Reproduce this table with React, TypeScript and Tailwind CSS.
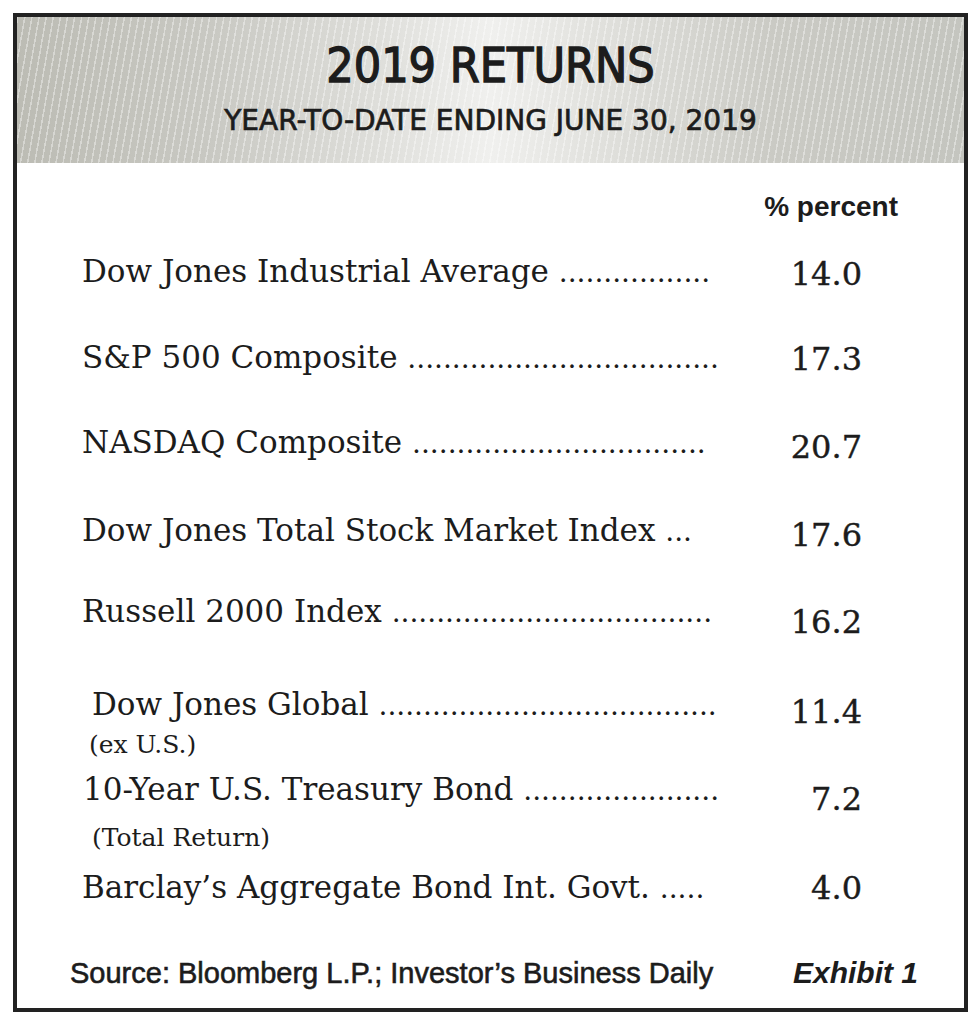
import React from "react";

type Row = {
  label: string;
  dots: string;
  value: string;
  sub?: string;
  h: string;
  indent: string;
  subIndent?: string;
  subMt?: string;
  numMt: string;
};

const rows: Row[] = [
  { label: "Dow Jones Industrial Average", dots: ".................", value: "14.0", h: "h-[86px]", indent: "pl-[65px]", numMt: "mt-[2px]" },
  { label: "S&P 500 Composite", dots: "...................................", value: "17.3", h: "h-[85px]", indent: "pl-[65px]", numMt: "mt-[1px]" },
  { label: "NASDAQ Composite", dots: ".................................", value: "20.7", h: "h-[88px]", indent: "pl-[65px]", numMt: "mt-[4px]" },
  { label: "Dow Jones Total Stock Market Index", dots: "...", value: "17.6", h: "h-[81px]", indent: "pl-[65px]", numMt: "mt-[4px]" },
  { label: "Russell 2000 Index", dots: "....................................", value: "16.2", h: "h-[93px]", indent: "pl-[65px]", numMt: "mt-[10px]" },
  { label: "Dow Jones Global", dots: "......................................", value: "11.4", sub: "(ex U.S.)", h: "h-[85px]", indent: "pl-[75px]", subIndent: "pl-[72px]", subMt: "mt-[11px]", numMt: "mt-[7px]" },
  { label: "10-Year U.S. Treasury Bond", dots: "......................", value: "7.2", sub: "(Total Return)", h: "h-[98px]", indent: "pl-[66px]", subIndent: "pl-[75px]", subMt: "mt-[19px]", numMt: "mt-[9px]" },
  { label: "Barclay\u2019s Aggregate Bond Int. Govt.", dots: ".....", value: "4.0", h: "h-[86px]", indent: "pl-[65px]", numMt: "mt-[0px]" },
];

export default function App() {
  return (
    <div className="min-h-screen bg-white pt-[13px] pl-[13px] text-[#1c1c1c]">
      <div className="w-[955px] h-[999px] border-4 border-[#222] flex flex-col">
        <div className="h-[146px] shrink-0 bg-[image:repeating-linear-gradient(100deg,rgba(255,255,255,0.38)_0px,rgba(255,255,255,0.38)_1.5px,transparent_1.5px,transparent_7px),linear-gradient(90deg,#bcbcb4_0%,#c8c8c2_20%,#dededa_38%,#f0f0ee_50%,#e0e0dc_62%,#cacac4_80%,#c4c5bf_100%)]">
          <div className="pt-[24px] text-center text-[48px] leading-[48px] font-['DejaVu_Sans_Condensed','DejaVu_Sans',sans-serif] font-stretch-condensed [-webkit-text-stroke:1.3px_#1c1c1c]">
            2019 RETURNS
          </div>
          <div className="mt-[18px] text-center text-[28px] leading-[28px] font-['DejaVu_Sans',sans-serif] [-webkit-text-stroke:0.7px_#1c1c1c]">
            YEAR-TO-DATE ENDING JUNE 30, 2019
          </div>
        </div>

        <div className="mt-[30px] h-[28px] pr-[66px] text-right text-[28px] leading-[28px] font-bold font-['Liberation_Sans',Arial,sans-serif]">
          % percent
        </div>

        <div className="mt-[35px] flex flex-col font-['DejaVu_Serif',serif]">
          {rows.map((r) => (
            <div key={r.label} className={`${r.h} flex items-start`}>
              <div className="flex-1 flex flex-col">
                <div className={`${r.indent} text-[31px] leading-[31px] whitespace-nowrap`}>
                  {r.label} <span className="text-[28px]">{r.dots}</span>
                </div>
                {r.sub && (
                  <div className={`${r.subIndent} ${r.subMt} text-[25px] leading-[25px] whitespace-nowrap`}>
                    {r.sub}
                  </div>
                )}
              </div>
              <div className={`${r.numMt} pr-[102px] text-right text-[32px] leading-[32px] [-webkit-text-stroke:0.4px_#1c1c1c]`}>
                {r.value}
              </div>
            </div>
          ))}
        </div>

        <div className="flex items-baseline justify-between pl-[53px] pr-[46px] font-['Liberation_Sans',Arial,sans-serif]">
          <span className="text-[29px] leading-[29px] [-webkit-text-stroke:0.6px_#1c1c1c]">
            Source: Bloomberg L.P.; Investor{"\u2019"}s Business Daily
          </span>
          <span className="text-[30px] leading-[29px] font-bold italic">Exhibit 1</span>
        </div>
      </div>
    </div>
  );
}
